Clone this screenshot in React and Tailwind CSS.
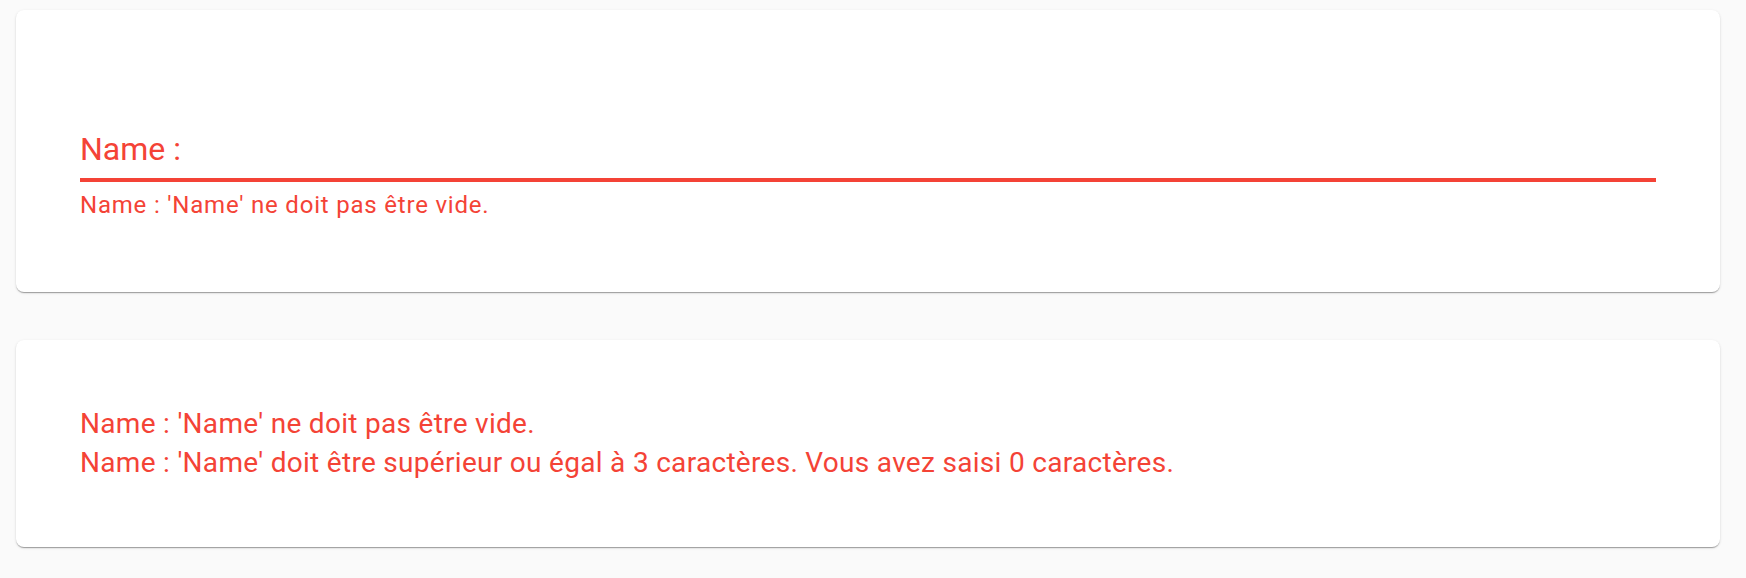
export default function App() {
  const font = { fontFamily: "Roboto, 'Liberation Sans', sans-serif" };
  return (
    <div className="min-h-[578px] w-full bg-[#fafafa] pt-[10px] pl-[16px]" style={font}>
      <div className="w-[1704px] rounded-[8px] bg-white shadow-[0_2px_1px_-1px_rgba(0,0,0,0.2),0_1px_1px_0_rgba(0,0,0,0.14),0_1px_3px_0_rgba(0,0,0,0.12)] px-[64px] pt-[120px] pb-[70px]">
        <div className="text-[32px] leading-[38px] text-[#f44336]">Name :</div>
        <div className="mt-[10px] h-[4px] bg-[#f44336]" />
        <div className="mt-[7px] text-[24px] leading-[33px] tracking-[0.8px] text-[#f44336]">
          Name : 'Name' ne doit pas être vide.
        </div>
      </div>
      <div className="mt-[48px] w-[1704px] rounded-[8px] bg-white shadow-[0_2px_1px_-1px_rgba(0,0,0,0.2),0_1px_1px_0_rgba(0,0,0,0.14),0_1px_3px_0_rgba(0,0,0,0.12)] px-[64px] pt-[64px] pb-[65px]">
        <div className="text-[28px] leading-[39px] tracking-[0.3px] text-[#f44336]">
          <div>Name : 'Name' ne doit pas être vide.</div>
          <div>Name : 'Name' doit être supérieur ou égal à 3 caractères. Vous avez saisi 0 caractères.</div>
        </div>
      </div>
    </div>
  );
}
